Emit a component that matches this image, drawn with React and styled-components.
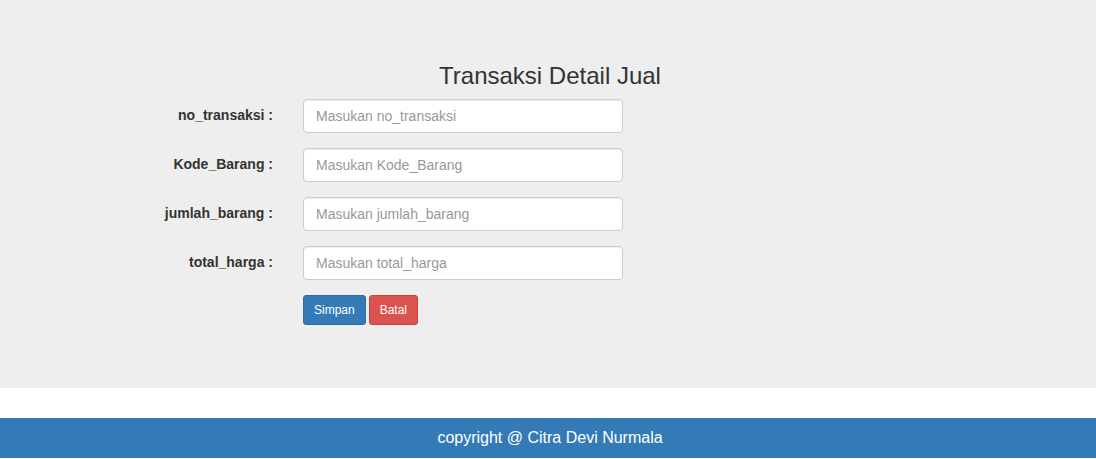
import React from "react";
import styled, { createGlobalStyle } from "styled-components";

const GlobalStyle = createGlobalStyle`
  * { box-sizing: border-box; }
  html, body { margin: 0; padding: 0; background: #fff; }
  body {
    font-family: "Liberation Sans", Arial, Helvetica, sans-serif;
    font-size: 14px;
    line-height: 1.42857;
    color: #333;
  }
`;

const Jumbotron = styled.section`
  background: #eee;
  padding: 43px 0 63px;
  margin-bottom: 30px;
`;

const Title = styled.h3`
  margin: 20px 0 10px;
  padding-left: 4px;
  font-size: 24px;
  font-weight: 500;
  line-height: 1.1;
  text-align: center;
  color: #333;
`;

const Form = styled.form`
  width: 970px;
  margin: 0 auto;
  display: flex;
  flex-direction: column;
  gap: 15px;
`;

const Row = styled.div`
  display: grid;
  grid-template-columns: 210px 320px;
  column-gap: 30px;
  align-items: center;
`;

const Label = styled.label`
  text-align: right;
  font-weight: 700;
  font-size: 14px;
  color: #333;
`;

const Input = styled.input`
  display: block;
  width: 320px;
  height: 34px;
  padding: 6px 12px;
  font-family: inherit;
  font-size: 14px;
  color: #555;
  background: #fff;
  border: 1px solid #ccc;
  border-radius: 4px;
  box-shadow: inset 0 1px 1px rgba(0, 0, 0, 0.075);
  outline: none;
  &::placeholder { color: #999; }
`;

const Buttons = styled.div`
  grid-column: 2;
  display: flex;
  gap: 3px;
`;

const Button = styled.button`
  height: 30px;
  padding: 5px 10px;
  font-family: inherit;
  font-size: 12px;
  line-height: 1.5;
  color: #fff;
  border-radius: 3px;
  border: 1px solid ${(p) => (p.$variant === "danger" ? "#d43f3a" : "#2e6da4")};
  background: ${(p) => (p.$variant === "danger" ? "#d9534f" : "#337ab7")};
  cursor: pointer;
`;

const Footer = styled.footer`
  height: 40px;
  background: #337ab7;
  color: #fff;
  font-size: 16px;
  display: flex;
  align-items: center;
  justify-content: center;
  padding-left: 4px;
`;

const fields = [
  { name: "no_transaksi" },
  { name: "Kode_Barang" },
  { name: "jumlah_barang" },
  { name: "total_harga" },
];

export default function App() {
  return (
    <>
      <GlobalStyle />
      <Jumbotron>
        <Title>Transaksi Detail Jual</Title>
        <Form onSubmit={(e) => e.preventDefault()}>
          {fields.map((f) => (
            <Row key={f.name}>
              <Label htmlFor={f.name}>{f.name} :</Label>
              <Input id={f.name} type="text" placeholder={`Masukan ${f.name}`} />
            </Row>
          ))}
          <Row>
            <Buttons>
              <Button type="submit">Simpan</Button>
              <Button type="reset" $variant="danger">Batal</Button>
            </Buttons>
          </Row>
        </Form>
      </Jumbotron>
      <Footer>copyright @ Citra Devi Nurmala</Footer>
    </>
  );
}
